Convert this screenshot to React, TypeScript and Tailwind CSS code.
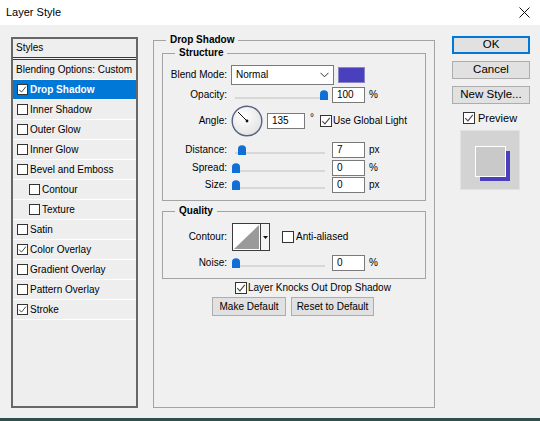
import React from "react";

type CheckProps = { checked?: boolean; size?: number; className?: string };

function Check({ checked, size = 11, className = "" }: CheckProps) {
  return (
    <span
      className={`flex shrink-0 items-center justify-center border border-[#333333] bg-white ${className}`}
      style={{ width: size, height: size }}
    >
      {checked && (
        <svg width={size - 2} height={size - 2} viewBox="0 0 10 10">
          <path d="M1.3 5.2 L3.9 7.9 L8.8 1.8" fill="none" stroke="#4a4a4a" strokeWidth="1.1" />
        </svg>
      )}
    </span>
  );
}

function Thumb({ left }: { left: number }) {
  return (
    <svg className="absolute top-[3px]" style={{ left }} width="8" height="10" viewBox="0 0 8 10">
      <path d="M0 4 Q0 0.3 4 0.3 Q8 0.3 8 4 V10 H0 Z" fill="#0f6fd6" />
    </svg>
  );
}

function NumBox({ value, w = 33, h = 16 }: { value: string; w?: number; h?: number }) {
  return (
    <div
      className="flex shrink-0 items-center border border-[#7a7a7a] bg-white pl-[4px]"
      style={{ width: w, height: h }}
    >
      {value}
    </div>
  );
}

function SliderRow({
  label,
  thumb,
  value,
  unit,
  className = "",
}: {
  label: string;
  thumb: number;
  value: string;
  unit: string;
  className?: string;
}) {
  return (
    <div className={`flex h-[16px] items-center ${className}`}>
      <span className="w-[64px] text-right">{label}</span>
      <div className="relative ml-[4px] flex h-[16px] w-[98px] items-center">
        <div className="ml-[4px] mt-[5px] h-[2px] w-[90px] bg-[#d8d8d8]" />
        <Thumb left={thumb} />
      </div>
      <div className="ml-[3px]">
        <NumBox value={value} />
      </div>
      <span className="ml-[4px]">{unit}</span>
    </div>
  );
}

const styleRows = [
  { label: "Drop Shadow", checked: true, selected: true },
  { label: "Inner Shadow" },
  { label: "Outer Glow" },
  { label: "Inner Glow" },
  { label: "Bevel and Emboss" },
  { label: "Contour", indent: true },
  { label: "Texture", indent: true },
  { label: "Satin" },
  { label: "Color Overlay", checked: true },
  { label: "Gradient Overlay" },
  { label: "Pattern Overlay" },
  { label: "Stroke", checked: true },
];

function StylesList() {
  return (
    <div className="mt-[12px] flex h-[371px] w-[127px] shrink-0 flex-col border-2 border-[#676767] bg-[#eeeeee]">
      <div className="flex h-[21px] items-center border-b-[3px] border-double border-[#3a3a3a] pl-[3px]">
        Styles
      </div>
      <div className="flex h-[20px] items-center border-b border-white pl-[3px]">
        Blending Options: Custom
      </div>
      {styleRows.map((r) => (
        <div
          key={r.label}
          className={`flex h-[20px] items-center border-b border-white ${
            r.indent ? "pl-[16px]" : "pl-[4px]"
          } ${r.selected ? "bg-[#0078d7] font-bold text-white" : ""}`}
        >
          <Check checked={r.checked} />
          <span className="ml-[2px]">{r.label}</span>
        </div>
      ))}
    </div>
  );
}

function Dial() {
  return (
    <svg width="32" height="32" viewBox="0 0 32 32" className="shrink-0">
      <defs>
        <radialGradient id="dialfill" cx="0.4" cy="0.35" r="0.7">
          <stop offset="0" stopColor="#ffffff" />
          <stop offset="1" stopColor="#e2e2e2" />
        </radialGradient>
      </defs>
      <circle cx="16" cy="16" r="14.8" fill="url(#dialfill)" stroke="#55637f" strokeWidth="1.4" />
      <line x1="16" y1="16" x2="7" y2="7" stroke="#111" strokeWidth="1" />
      <circle cx="16" cy="16" r="1.4" fill="#111" />
    </svg>
  );
}

function ContourPicker() {
  return (
    <div className="flex h-[28px] w-[38px] shrink-0 border border-[#3c3c3c] bg-white">
      <svg width="27" height="26" viewBox="0 0 27 26" className="shrink-0">
        <path d="M1 25 L26 1 V25 Z" fill="#9a9a9a" />
      </svg>
      <div className="flex flex-1 items-center justify-center border-l border-[#3c3c3c] bg-[#f4f4f4]">
        <svg width="5" height="3" viewBox="0 0 5 3">
          <path d="M0 0 H5 L2.5 3 Z" fill="#111" />
        </svg>
      </div>
    </div>
  );
}

function DropShadowPanel() {
  return (
    <fieldset className="ml-[15px] mt-[9px] h-[374px] w-[281px] shrink-0 border border-[#a3a3a3] px-[8px] pt-[1px]">
      <legend className="ml-[4px] px-[4px] font-bold leading-[12px]">Drop Shadow</legend>

      <fieldset className="h-[154px] w-[264px] border border-[#a3a3a3] pt-[6px]">
        <legend className="ml-[12px] px-[4px] font-bold leading-[12px]">Structure</legend>

        <div className="flex h-[20px] items-center">
          <span className="w-[64px] text-right">Blend Mode:</span>
          <div className="ml-[4px] flex h-[20px] w-[103px] items-center justify-between border border-[#7a7a7a] bg-white pl-[4px] pr-[4px]">
            <span>Normal</span>
            <svg width="9" height="6" viewBox="0 0 9 6">
              <path d="M0.5 0.8 L4.5 4.8 L8.5 0.8" fill="none" stroke="#333" strokeWidth="1" />
            </svg>
          </div>
          <div className="ml-[4px] h-[16px] w-[27px] border border-[#8a86c8] bg-[#4a3fbd]" />
        </div>

        <SliderRow className="mt-[2px]" label="Opacity:" thumb={89} value="100" unit="%" />

        <div className="mt-[2px] flex h-[32px] items-center">
          <span className="w-[64px] text-right">Angle:</span>
          <div className="ml-[4px]">
            <Dial />
          </div>
          <div className="ml-[4px]">
            <NumBox value="135" w={38} h={16} />
          </div>
          <span className="ml-[5px] -mt-[6px]">°</span>
          <Check checked size={12} className="ml-[6px]" />
          <span className="ml-[1px]">Use Global Light</span>
        </div>

        <SliderRow className="mt-[5px]" label="Distance:" thumb={7} value="7" unit="px" />
        <SliderRow className="mt-[2px]" label="Spread:" thumb={1} value="0" unit="%" />
        <SliderRow className="mt-[1px]" label="Size:" thumb={1} value="0" unit="px" />
      </fieldset>

      <fieldset className="mt-[4px] h-[74px] w-[264px] border border-[#a3a3a3] pt-[6px]">
        <legend className="ml-[12px] px-[4px] font-bold leading-[12px]">Quality</legend>
        <div className="flex h-[28px] items-center">
          <span className="w-[64px] text-right">Contour:</span>
          <div className="ml-[5px]">
            <ContourPicker />
          </div>
          <Check size={12} className="ml-[12px]" />
          <span className="ml-[2px]">Anti-aliased</span>
        </div>
        <SliderRow className="mt-[4px]" label="Noise:" thumb={1} value="0" unit="%" />
      </fieldset>

      <div className="ml-[73px] mt-[2px] flex h-[14px] items-center">
        <Check checked size={12} />
        <span className="ml-[1px]">Layer Knocks Out Drop Shadow</span>
      </div>

      <div className="ml-[50px] mt-[2px] flex gap-[5px]">
        <button className="flex h-[19px] w-[74px] items-center justify-center border border-[#adadad] bg-[#e1e1e1]">
          Make Default
        </button>
        <button className="flex h-[19px] w-[83px] items-center justify-center border border-[#adadad] bg-[#e1e1e1]">
          Reset to Default
        </button>
      </div>
    </fieldset>
  );
}

function ActionColumn() {
  return (
    <div className="ml-[17px] mt-[11px] flex w-[78px] shrink-0 flex-col text-[11.5px]">
      <button className="flex h-[18px] items-center justify-center border-2 border-[#0078d7] bg-[#e1e1e1]">
        OK
      </button>
      <button className="mt-[7px] flex h-[18px] items-center justify-center border border-[#adadad] bg-[#e1e1e1]">
        Cancel
      </button>
      <button className="mt-[7px] flex h-[18px] items-center justify-center border border-[#adadad] bg-[#e1e1e1]">
        New Style...
      </button>
      <div className="ml-[11px] mt-[8px] flex h-[12px] items-center text-[11px]">
        <Check checked size={12} />
        <span className="ml-[3px]">Preview</span>
      </div>
      <div className="ml-[8px] mt-[6px] flex h-[60px] w-[60px] items-start border border-[#e2e2e2] bg-[#d3d3d3] pl-[14px] pt-[15px]">
        <div className="relative h-[31px] w-[31px]">
          <div className="absolute left-[5px] top-[5px] h-[30px] w-[30px] bg-[#4a3fbd]" />
          <div className="absolute inset-0 border border-white bg-[#c9c9c9]" />
        </div>
      </div>
    </div>
  );
}

export default function App() {
  return (
    <div className="flex h-[421px] w-[540px] flex-col overflow-hidden bg-[#f0f0f0] font-['Liberation_Sans',Arial,sans-serif] text-[10px] leading-none text-black">
      <div className="flex h-[25px] shrink-0 items-center justify-between bg-white pl-[6px] pr-[10px]">
        <span className="text-[11px]">Layer Style</span>
        <svg width="11" height="11" viewBox="0 0 11 11">
          <path d="M0.5 0.5 L10.5 10.5 M10.5 0.5 L0.5 10.5" stroke="#111" strokeWidth="1" />
        </svg>
      </div>
      <div className="flex flex-1 items-start pl-[11px]">
        <StylesList />
        <DropShadowPanel />
        <ActionColumn />
      </div>
      <div className="h-[3px] shrink-0 bg-[#2e4f4e]" />
    </div>
  );
}
